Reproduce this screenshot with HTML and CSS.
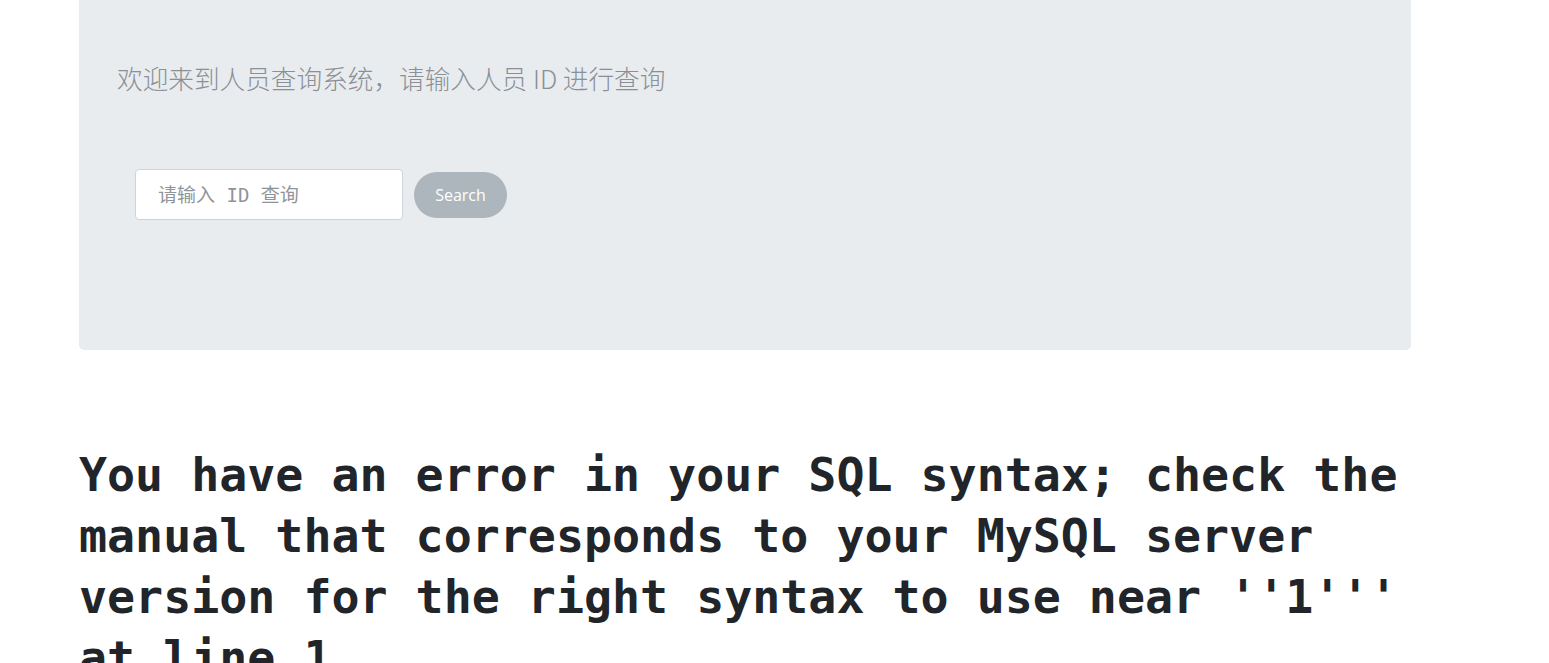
FILE: index.html
```html
<!DOCTYPE html>
<html lang="zh-CN">
<head>
<meta charset="utf-8">
<title>人员查询系统</title>
<link rel="stylesheet" href="styles.css">
</head>
<body>
<div class="page">
  <div class="jumbotron">
    <p class="lead">欢迎来到人员查询系统，请输入人员 ID 进行查询</p>
    <form class="search-form">
      <input class="search-input" type="text" placeholder="请输入 ID 查询">
      <button class="search-btn" type="button">Search</button>
    </form>
  </div>
  <h1 class="error">You have an error in your SQL syntax; check the manual that corresponds to your MySQL server version for the right syntax to use near ''1''' at line 1</h1>
</div>
</body>
</html>
```

FILE: styles.css
```css
html, body {
  margin: 0;
  padding: 0;
  background: #ffffff;
}

.page {
  width: 1332px;
  margin-left: 79px;
}

.jumbotron {
  box-sizing: border-box;
  height: 350px;
  background: #e9ecef;
  border-radius: 0 0 5px 5px;
  padding: 59px 38px 0;
}

.lead {
  margin: 0;
  font-family: "Noto Sans CJK SC", "Noto Sans", sans-serif;
  font-weight: 300;
  font-size: 25.65px;
  line-height: 37px;
  color: #8b9096;
}

.search-form {
  display: flex;
  align-items: center;
  gap: 11px;
  margin: 73px 0 0 18px;
}

.search-input {
  box-sizing: border-box;
  width: 268px;
  height: 51px;
  padding: 0 22px;
  border: 1px solid #ced4da;
  border-radius: 4px;
  background: #ffffff;
  font-family: "DejaVu Sans Mono", "Noto Sans CJK SC", monospace;
  font-size: 19px;
  color: #495057;
  outline: none;
}

.search-input::placeholder {
  color: #8f9499;
}

.search-btn {
  box-sizing: border-box;
  width: 93px;
  height: 46px;
  border: none;
  border-radius: 23px;
  background: #adb5bd;
  color: #ffffff;
  font-family: "Open Sans", "Noto Sans", sans-serif;
  font-size: 16px;
  padding: 0;
  cursor: pointer;
}

.error {
  margin: 95px 0 0;
  font-family: "DejaVu Sans Mono", "Liberation Mono", monospace;
  font-weight: bold;
  font-size: 46.6px;
  line-height: 61px;
  color: #212529;
}
```
